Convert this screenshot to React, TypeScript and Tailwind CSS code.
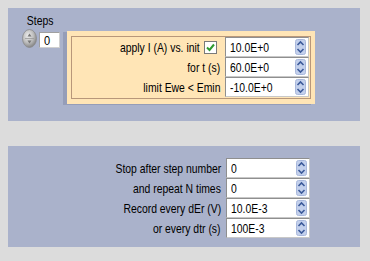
import React from "react";

const FONT = { fontFamily: '"Liberation Sans", Arial, sans-serif' };

function SpinIcon() {
  return (
    <svg width="11" height="16" viewBox="0 0 11 16" className="block">
      <rect x="0.5" y="0.5" width="10" height="15" rx="2" fill="#c3d0ec" stroke="#a9b8dc" />
      <path d="M2.5 6 L5.5 3 L8.5 6" fill="none" stroke="#3c5a9a" strokeWidth="1.6" />
      <path d="M2.5 10 L5.5 13 L8.5 10" fill="none" stroke="#3c5a9a" strokeWidth="1.6" />
    </svg>
  );
}

function NumField({ value }: { value: string }) {
  return (
    <div className="w-[84px] h-[20px] bg-white border border-[#8f8f8f] border-r-[#c8c8c8] border-b-[#c8c8c8] flex items-center pl-[4px] pr-[2px]">
      <span className="flex-1 text-[13px] leading-none text-black scale-x-[0.8] origin-left whitespace-nowrap">{value}</span>
      <SpinIcon />
    </div>
  );
}

function Knob() {
  return (
    <svg width="15" height="19" viewBox="0 0 15 19" className="block">
      <defs>
        <radialGradient id="kg" cx="40%" cy="35%" r="70%">
          <stop offset="0%" stopColor="#eeeeee" />
          <stop offset="55%" stopColor="#bdbdbd" />
          <stop offset="100%" stopColor="#7c7c7c" />
        </radialGradient>
      </defs>
      <ellipse cx="7.5" cy="9.5" rx="7" ry="9" fill="url(#kg)" stroke="#8a8a8a" strokeWidth="0.8" />
      <path d="M5.5 7.5 L7.5 4.5 L9.5 7.5 Z" fill="#777777" />
      <path d="M5.5 11.5 L7.5 14.5 L9.5 11.5 Z" fill="#777777" />
      <line x1="3" y1="9.5" x2="12" y2="9.5" stroke="#9a9a9a" strokeWidth="0.8" />
    </svg>
  );
}

function CheckBox() {
  return (
    <div className="w-[13px] h-[13px] bg-white border border-[#7a7a7a] flex items-center justify-center">
      <svg width="9" height="9" viewBox="0 0 9 9">
        <path d="M1 4.5 L3.5 7 L8 1.5" fill="none" stroke="#2f9a2f" strokeWidth="2" />
      </svg>
    </div>
  );
}

function Row({ label, value, extra }: { label: string; value: string; extra?: React.ReactNode }) {
  return (
    <div className="flex items-center justify-end h-[20px]">
      <span className="text-[13px] leading-none text-black whitespace-nowrap scale-x-[0.8] origin-right">{label}</span>
      {extra}
      <div className="w-[5px]" />
      <NumField value={value} />
    </div>
  );
}

export default function App() {
  return (
    <div className="w-[370px] h-[261px] bg-[#dcdcdc] pt-[8px] pl-[8px] overflow-hidden" style={FONT}>
      <div className="w-[352px] h-[113px] bg-[#aab2cb] flex flex-col pl-[14px] pt-[5px]">
        <div className="pl-[6px] h-[16px] text-[13px] leading-[15px] text-black scale-x-[0.8] origin-left">Steps</div>
        <div className="flex items-start">
          <Knob />
          <div className="ml-[2px] mt-[3px] w-[21px] h-[16px] bg-white border border-[#a0a0a0] border-r-[#d0d0d0] border-b-[#d0d0d0] flex items-center pl-[4px] text-[13px] leading-none">
            <span className="scale-x-[0.85] origin-left">0</span>
          </div>
          <div className="ml-[7px] mt-[2px] w-[248px] h-[73px] bg-[#ffe5b6] shadow-[-4px_1px_0_#959db8] pl-[4px] pt-[5px] pr-[4px]">
            <div className="h-[63px] border border-[#b8977a] flex flex-col pr-[1px]">
              <Row label="apply I (A) vs. init" value="10.0E+0" extra={<div className="ml-[4px] mr-[3px]"><CheckBox /></div>} />
              <Row label="for t (s)" value="60.0E+0" />
              <Row label="limit Ewe < Emin" value="-10.0E+0" />
            </div>
          </div>
        </div>
      </div>
      <div className="h-[25px]" />
      <div className="w-[352px] h-[101px] bg-[#aab2cb] pt-[12px] flex flex-col">
        <div className="w-[302px] flex flex-col">
          <Row label="Stop after step number" value="0" />
          <Row label="and repeat N times" value="0" />
          <Row label="Record every dEr (V)" value="10.0E-3" />
          <Row label="or every dtr (s)" value="100E-3" />
        </div>
      </div>
    </div>
  );
}
